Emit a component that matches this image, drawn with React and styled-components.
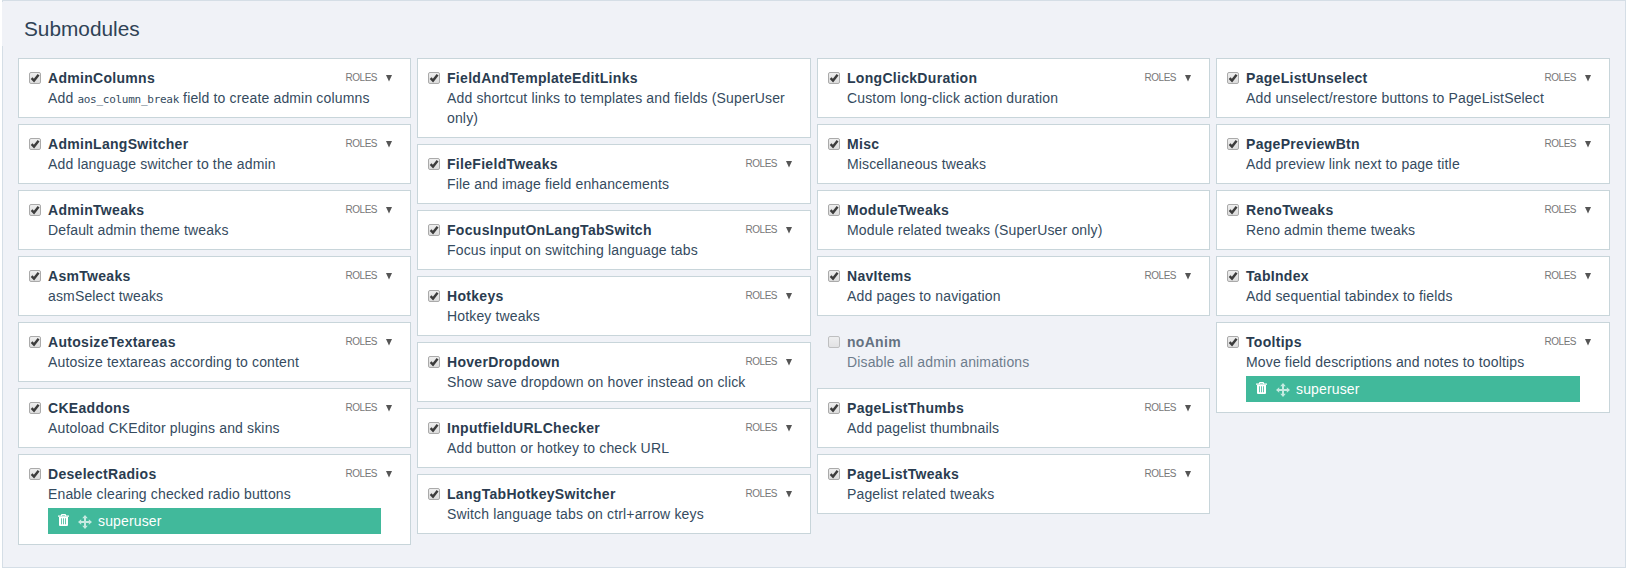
import React from "react";
import styled, { createGlobalStyle, css } from "styled-components";

const Global = createGlobalStyle`
  *, *::before, *::after { box-sizing: border-box; }
  body {
    margin: 0;
    background: #fff;
    font-family: Arial, "Liberation Sans", sans-serif;
    font-size: 14px;
    line-height: 20px;
    letter-spacing: 0.15px;
    color: #354b60;
  }
`;

const Panel = styled.section`
  position: relative;
  width: 1624px;
  height: 568px;
  margin-left: 2px;
  padding: 0 15px;
  background: #f0f2f7;
  border: 1px solid #d5dee6;

  &::before {
    content: "";
    position: absolute;
    left: -1px;
    top: 1px;
    width: 1px;
    height: 44px;
    background: #f0f2f7;
  }
`;

const Heading = styled.h2`
  margin: 0;
  padding: 16px 6px 17px;
  font-size: 20.8px;
  line-height: 24px;
  letter-spacing: 0;
  font-weight: 400;
  color: #2f4255;
`;

const Columns = styled.div`
  display: grid;
  grid-template-columns: 393px 394px 393px 394px;
  gap: 6px;
  align-items: start;
`;

const Column = styled.ul`
  display: flex;
  flex-direction: column;
  gap: 6px;
  margin: 0;
  padding: 0;
  list-style: none;
`;

const Card = styled.li`
  display: grid;
  grid-template-columns: 19px minmax(0, 1fr);
  padding: 9px 18px 9px 10px;
  background: #fff;
  border: 1px solid #c8d5da;
  ${(p) => p.$off && css`
    background: transparent;
    border-color: transparent;
  `}
`;

const Body = styled.div`
  min-width: 0;
  opacity: ${(p) => (p.$off ? 0.7 : 1)};
`;

const TitleRow = styled.div`
  display: flex;
  justify-content: space-between;
  height: 20px;
`;

const Title = styled.strong`
  font-weight: 700;
  letter-spacing: 0.3px;
  color: #2a3c50;
`;

const Roles = styled.span`
  display: flex;
  align-items: center;
  gap: 9px;
  font-size: 10px;
  letter-spacing: -0.5px;
  color: #777;
`;

const Description = styled.div`
  code {
    font-family: Consolas, "DejaVu Sans Mono", monospace;
    font-size: 11px;
    line-height: 1;
    letter-spacing: -0.27px;
  }
`;

const RoleTag = styled.div`
  display: flex;
  align-items: center;
  height: 26px;
  margin: 4px 11px 1px 0;
  padding-left: 10px;
  color: #fff;
  background: #41b99b;
`;

const TrashIcon = styled.svg`
  margin: -2px 9px 0 0;
`;

const MoveIcon = styled.svg`
  margin: 1px 6px 0 0;
  opacity: 0.7;
`;

const Box = styled.span`
  display: block;
  width: 12px;
  height: 12px;
  margin-top: 4px;
  border: 1px solid #aaa;
  border-radius: 2px;
  background: linear-gradient(#eee, #dcdcdc);
  opacity: ${(p) => (p.$off ? 0.7 : 1)};

  svg { display: block; }
`;

const COLUMNS = [
  [
    { name: "AdminColumns", text: <>Add <code>aos_column_break</code> field to create admin columns</> },
    { name: "AdminLangSwitcher", text: "Add language switcher to the admin" },
    { name: "AdminTweaks", text: "Default admin theme tweaks" },
    { name: "AsmTweaks", text: "asmSelect tweaks" },
    { name: "AutosizeTextareas", text: "Autosize textareas according to content" },
    { name: "CKEaddons", text: "Autoload CKEditor plugins and skins" },
    { name: "DeselectRadios", text: "Enable clearing checked radio buttons", role: "superuser" },
  ],
  [
    { name: "FieldAndTemplateEditLinks", text: "Add shortcut links to templates and fields (SuperUser only)", noRoles: true },
    { name: "FileFieldTweaks", text: "File and image field enhancements" },
    { name: "FocusInputOnLangTabSwitch", text: "Focus input on switching language tabs" },
    { name: "Hotkeys", text: "Hotkey tweaks" },
    { name: "HoverDropdown", text: "Show save dropdown on hover instead on click" },
    { name: "InputfieldURLChecker", text: "Add button or hotkey to check URL" },
    { name: "LangTabHotkeySwitcher", text: "Switch language tabs on ctrl+arrow keys" },
  ],
  [
    { name: "LongClickDuration", text: "Custom long-click action duration" },
    { name: "Misc", text: "Miscellaneous tweaks", noRoles: true },
    { name: "ModuleTweaks", text: "Module related tweaks (SuperUser only)", noRoles: true },
    { name: "NavItems", text: "Add pages to navigation" },
    { name: "noAnim", text: "Disable all admin animations", noRoles: true, off: true },
    { name: "PageListThumbs", text: "Add pagelist thumbnails" },
    { name: "PageListTweaks", text: "Pagelist related tweaks" },
  ],
  [
    { name: "PageListUnselect", text: "Add unselect/restore buttons to PageListSelect" },
    { name: "PagePreviewBtn", text: "Add preview link next to page title" },
    { name: "RenoTweaks", text: "Reno admin theme tweaks" },
    { name: "TabIndex", text: "Add sequential tabindex to fields" },
    { name: "Tooltips", text: "Move field descriptions and notes to tooltips", role: "superuser" },
  ],
];

function Checkbox({ off }) {
  return (
    <Box $off={off}>
      {!off && (
        <svg width="10" height="10" viewBox="0 0 10 10" fill="none">
          <path d="M1.6 5.2 4 7.6 8.6 1.8" stroke="#3c3c3c" strokeWidth="2.4" />
        </svg>
      )}
    </Box>
  );
}

function Role({ name }) {
  return (
    <RoleTag>
      <TrashIcon width="11" height="12" viewBox="0 0 11 12" fill="#fff">
        <path fillRule="evenodd" d="M3.5 0h4l.8 1.5H11v1.2H0V1.5h2.7zM4.2.9l-.3.6h3.2L6.8.9zM1 3h9v8a1 1 0 0 1-1 1H2a1 1 0 0 1-1-1zM3 4.3v6h.8v-6zm2.1 0v6h.8v-6zm2.1 0v6H8v-6z" />
      </TrashIcon>
      <MoveIcon width="14" height="14" viewBox="0 0 14 14" fill="#fff">
        <path d="M7 0l2.8 3.2H8V6h2.8V4.2L14 7l-3.2 2.8V8H8v2.8h1.8L7 14l-2.8-3.2H6V8H3.2v1.8L0 7l3.2-2.8V6H6V3.2H4.2z" />
      </MoveIcon>
      {name}
    </RoleTag>
  );
}

function Module({ item }) {
  return (
    <Card $off={item.off}>
      <Checkbox off={item.off} />
      <Body $off={item.off}>
        <TitleRow>
          <Title>{item.name}</Title>
          {!item.noRoles && (
            <Roles>
              ROLES
              <svg width="6" height="7" viewBox="0 0 6 7"><path d="M0 0h6L3 6.5z" fill="#555" /></svg>
            </Roles>
          )}
        </TitleRow>
        <Description>{item.text}</Description>
        {item.role && <Role name={item.role} />}
      </Body>
    </Card>
  );
}

export default function App() {
  return (
    <>
      <Global />
      <Panel>
        <Heading>Submodules</Heading>
        <Columns>
          {COLUMNS.map((items, i) => (
            <Column key={i}>
              {items.map((item) => <Module key={item.name} item={item} />)}
            </Column>
          ))}
        </Columns>
      </Panel>
    </>
  );
}
